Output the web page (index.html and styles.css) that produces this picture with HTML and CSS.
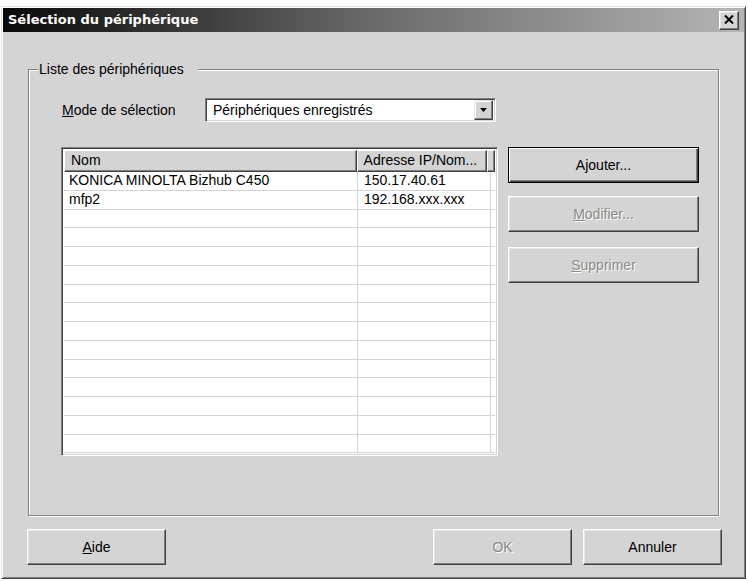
FILE: index.html
```html
<!DOCTYPE html>
<html lang="fr">
<head>
<meta charset="utf-8">
<title>Sélection du périphérique</title>
<link rel="stylesheet" href="styles.css">
</head>
<body>
<div class="window">
  <div class="titlebar">
    <span class="title">Sélection du périphérique</span>
    <button class="btn close" aria-label="Fermer">
      <svg width="10" height="9" viewBox="0 0 10 9"><path d="M1 0.5 L9 8.5 M9 0.5 L1 8.5" stroke="#000" stroke-width="2" fill="none"/></svg>
    </button>
  </div>
  <fieldset class="group">
    <legend class="group-title">Liste des périphériques</legend>
    <div class="mode-row">
      <label class="mode-label"><u>M</u>ode de sélection</label>
      <div class="combo">
        <span class="combo-text">Périphériques enregistrés</span>
        <span class="combo-btn"><svg width="7" height="4" viewBox="0 0 7 4"><path d="M0 0 H7 L3.5 4 Z" fill="#000"/></svg></span>
      </div>
    </div>
    <div class="main-row">
      <div class="listview">
        <div class="lv-header">
          <div class="hcell c1">Nom</div>
          <div class="hcell c2">Adresse IP/Nom...</div>
          <div class="hcell c3"></div>
        </div>
        <div class="lv-row"><div class="cell c1">KONICA MINOLTA Bizhub C450</div><div class="cell c2">150.17.40.61</div><div class="cell c3"></div></div>
        <div class="lv-row"><div class="cell c1">mfp2</div><div class="cell c2">192.168.xxx.xxx</div><div class="cell c3"></div></div>
        <div class="lv-row"><div class="cell c1"></div><div class="cell c2"></div><div class="cell c3"></div></div>
        <div class="lv-row"><div class="cell c1"></div><div class="cell c2"></div><div class="cell c3"></div></div>
        <div class="lv-row"><div class="cell c1"></div><div class="cell c2"></div><div class="cell c3"></div></div>
        <div class="lv-row"><div class="cell c1"></div><div class="cell c2"></div><div class="cell c3"></div></div>
        <div class="lv-row"><div class="cell c1"></div><div class="cell c2"></div><div class="cell c3"></div></div>
        <div class="lv-row"><div class="cell c1"></div><div class="cell c2"></div><div class="cell c3"></div></div>
        <div class="lv-row"><div class="cell c1"></div><div class="cell c2"></div><div class="cell c3"></div></div>
        <div class="lv-row"><div class="cell c1"></div><div class="cell c2"></div><div class="cell c3"></div></div>
        <div class="lv-row"><div class="cell c1"></div><div class="cell c2"></div><div class="cell c3"></div></div>
        <div class="lv-row"><div class="cell c1"></div><div class="cell c2"></div><div class="cell c3"></div></div>
        <div class="lv-row"><div class="cell c1"></div><div class="cell c2"></div><div class="cell c3"></div></div>
        <div class="lv-row"><div class="cell c1"></div><div class="cell c2"></div><div class="cell c3"></div></div>
        <div class="lv-row"><div class="cell c1"></div><div class="cell c2"></div><div class="cell c3"></div></div>
      </div>
      <div class="side-buttons">
        <button class="btn wide default">Ajouter...</button>
        <button class="btn wide disabled"><u>M</u>odifier...</button>
        <button class="btn wide disabled gap2"><u>S</u>upprimer</button>
      </div>
    </div>
  </fieldset>
  <div class="bottom-row">
    <button class="btn bottom"><u>A</u>ide</button>
    <span class="spacer"></span>
    <button class="btn bottom disabled">OK</button>
    <button class="btn bottom">Annuler</button>
  </div>
</div>
</body>
</html>
```

FILE: styles.css
```css
* { box-sizing: border-box; }

body {
  margin: 0;
  background: #ffffff;
  font-family: "Liberation Sans", Arial, sans-serif;
  font-size: 14px;
  color: #000;
}

.window {
  margin: 6px 0 0 1px;
  width: 745px;
  height: 573px;
  background: #d4d4d4;
  border: 1px solid;
  border-color: #e2e2e2 #404040 #404040 #e2e2e2;
  box-shadow: inset 1px 1px 0 #ffffff, inset -1px -1px 0 #808080;
  padding: 1px;
  display: flex;
  flex-direction: column;
}

.titlebar {
  height: 24px;
  flex: none;
  display: flex;
  align-items: center;
  background: linear-gradient(to right, #0a0a0a 0%, #6a6a6a 50%, #b4b4b4 100%);
  padding-left: 5px;
}

.title {
  flex: 1;
  color: #ffffff;
  font-family: "DejaVu Sans", Verdana, sans-serif;
  font-weight: bold;
  font-size: 13px;
  line-height: 16px;
}

.btn {
  font-family: "Liberation Sans", Arial, sans-serif;
  font-size: 14px;
  color: #000;
  background: #d4d4d4;
  border: 1px solid;
  border-color: #ffffff #404040 #404040 #ffffff;
  box-shadow: inset -1px -1px 0 #808080, inset 1px 1px 0 #e6e6e6;
  padding: 0;
  margin: 0;
  display: flex;
  align-items: center;
  justify-content: center;
}

.close {
  width: 20px;
  height: 19px;
  margin-right: 5px;
}

.close svg { display: block; margin-top: -1px; }

.group {
  flex: none;
  margin: 29px 0 0 25px;
  width: 691px;
  height: 455px;
  border: 1px solid #808080;
  box-shadow: 1px 1px 0 #ffffff, inset 1px 1px 0 #ffffff;
  padding: 0;
  min-width: 0;
}

.group-title {
  margin-left: 9px;
  padding: 0 14px 0 1px;
  line-height: 16px;
  background: #d4d4d4;
}

.mode-row {
  display: flex;
  align-items: center;
  margin: 21px 0 0 33px;
  height: 24px;
}

.mode-label {
  width: 143px;
  flex: none;
}

.combo {
  width: 291px;
  height: 24px;
  display: flex;
  align-items: center;
  background: #ffffff;
  border: 1px solid;
  border-color: #808080 #ffffff #ffffff #808080;
  box-shadow: inset 1px 1px 0 #404040, inset -1px -1px 0 #d4d4d4;
  padding: 2px;
}

.combo-text {
  flex: 1;
  padding-left: 5px;
}

.combo-btn {
  width: 19px;
  height: 20px;
  display: flex;
  align-items: center;
  justify-content: center;
  background: #d4d4d4;
  border: 1px solid;
  border-color: #e6e6e6 #404040 #404040 #e6e6e6;
  box-shadow: inset -1px -1px 0 #808080, inset 1px 1px 0 #ffffff;
}

.combo-btn svg { display: block; }

.main-row {
  display: flex;
  align-items: flex-start;
  margin: 25px 0 0 32px;
}

.listview {
  width: 437px;
  height: 309px;
  flex: none;
  background: #ffffff;
  border: 1px solid;
  border-color: #808080 #ffffff #ffffff #808080;
  box-shadow: inset 1px 1px 0 #404040, inset -1px -1px 0 #d4d4d4;
  padding: 2px;
  overflow: hidden;
}

.lv-header {
  display: flex;
  height: 22px;
}

.hcell {
  height: 22px;
  background: #d4d4d4;
  border: 1px solid;
  border-color: #ffffff #404040 #404040 #ffffff;
  box-shadow: inset -1px -1px 0 #808080;
  padding-left: 6px;
  line-height: 19px;
  white-space: nowrap;
}

.hcell.c1 { width: 294px; }
.hcell.c2 { width: 131px; }
.hcell.c3 { flex: 1; }

.lv-row {
  display: flex;
  height: 18.75px;
  border-bottom: 1px solid #d4d4d4;
}

.cell {
  line-height: 17px;
  white-space: nowrap;
  border-right: 1px solid #d4d4d4;
}

.cell.c1 { width: 294px; padding-left: 5px; }
.cell.c2 { width: 133px; padding-left: 6px; }
.cell.c3 { flex: 1; border-right: none; }

.side-buttons {
  margin-left: 10px;
  display: flex;
  flex-direction: column;
  gap: 13px;
}

.wide {
  width: 191px;
  height: 36px;
}

.gap2 { margin-top: 2px; }

.default {
  border: 1px solid #000;
  box-shadow: inset 1px 1px 0 #ffffff, inset -1px -1px 0 #404040, inset -2px -2px 0 #808080;
}

.disabled {
  color: #8a8a8a;
  text-shadow: 1px 1px 0 #ffffff;
}

.bottom-row {
  display: flex;
  margin: 13px 22px 0 24px;
  gap: 11px;
}

.spacer { flex: 1; }

.bottom {
  width: 139px;
  height: 36px;
}
```
